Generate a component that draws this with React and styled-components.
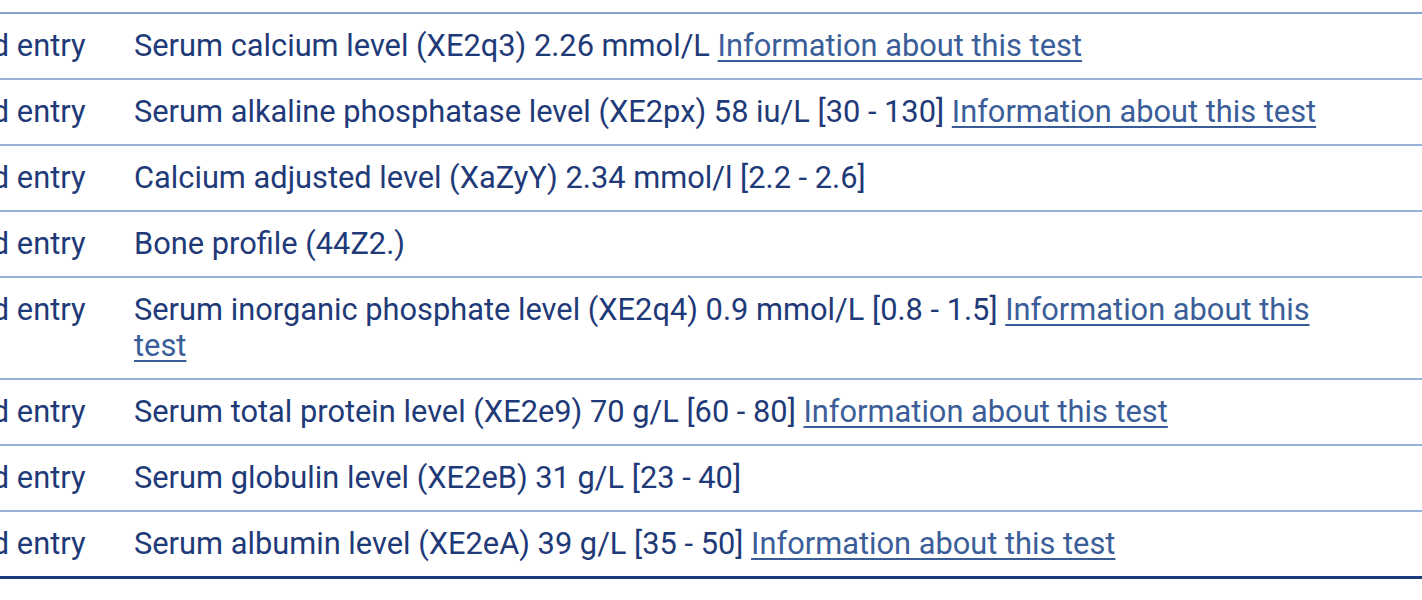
import React from "react";
import styled, { createGlobalStyle } from "styled-components";

const Global = createGlobalStyle`
  html, body { margin: 0; padding: 0; background: #ffffff; }
  body { font-family: Roboto, "Noto Sans", "Liberation Sans", sans-serif; }
`;

const Viewport = styled.div`
  width: 1422px;
  overflow: hidden;
  padding-top: 12px;
`;

const Table = styled.table`
  border-collapse: collapse;
  table-layout: fixed;
  margin-left: -135px;
  width: 1600px;
  font-size: 30.8px;
  line-height: 36px;
  color: #1f3a78;
  border-top: 2px solid #86a2cd;
  border-bottom: 3px solid #1d3a7a;
`;

const Row = styled.tr`
  border-bottom: 2px solid #98b1d8;
  &:last-child { border-bottom: none; }
`;

const Cell = styled.td`
  vertical-align: top;
  padding: 14px 14px 14px;
  white-space: ${(p) => (p.$nowrap ? "nowrap" : "normal")};
`;

const InfoLink = styled.a`
  color: #3b5e99;
  text-decoration: underline;
  text-decoration-thickness: 2px;
  text-underline-offset: 4px;
  cursor: pointer;
`;

const rows = [
  { text: "Serum calcium level (XE2q3) 2.26 mmol/L", link: true },
  { text: "Serum alkaline phosphatase level (XE2px) 58 iu/L [30 - 130]", link: true },
  { text: "Calcium adjusted level (XaZyY) 2.34 mmol/l [2.2 - 2.6]", link: false },
  { text: "Bone profile (44Z2.)", link: false },
  { text: "Serum inorganic phosphate level (XE2q4) 0.9 mmol/L [0.8 - 1.5]", link: true },
  { text: "Serum total protein level (XE2e9) 70 g/L [60 - 80]", link: true },
  { text: "Serum globulin level (XE2eB) 31 g/L [23 - 40]", link: false },
  { text: "Serum albumin level (XE2eA) 39 g/L [35 - 50]", link: true },
];

export default function App() {
  return (
    <>
      <Global />
      <Viewport>
        <Table>
          <colgroup>
            <col style={{ width: "255px" }} />
            <col style={{ width: "1220px" }} />
            <col />
          </colgroup>
          <tbody>
            {rows.map((r, i) => (
              <Row key={i}>
                <Cell $nowrap>Recorded entry</Cell>
                <Cell>
                  {r.text}
                  {r.link && (
                    <>
                      {" "}
                      <InfoLink href="#">Information about this test</InfoLink>
                    </>
                  )}
                </Cell>
                <Cell />
              </Row>
            ))}
          </tbody>
        </Table>
      </Viewport>
    </>
  );
}
